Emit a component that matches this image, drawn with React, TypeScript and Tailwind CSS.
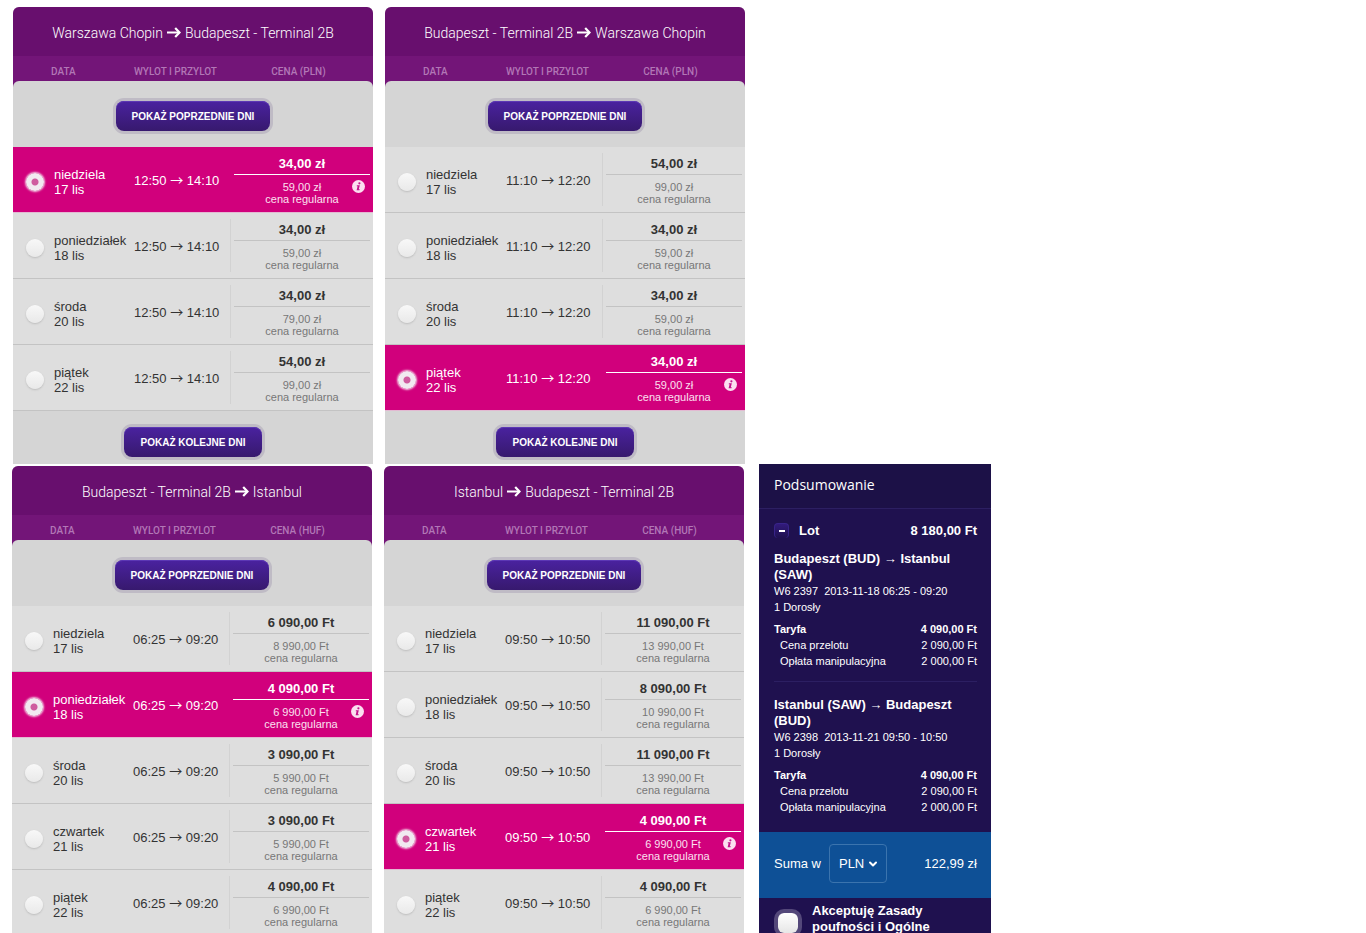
import { useState } from "react";
import { ChevronDown } from "lucide-react";

type Flight = {
  day: string;
  date: string;
  price: string;
  regular: string;
};

type Panel = {
  id: string;
  from: string;
  to: string;
  currency: string;
  depart: string;
  arrive: string;
  selected: number;
  flights: Flight[];
};

const topPanels: Panel[] = [
  {
    id: "waw-bud",
    from: "Warszawa Chopin",
    to: "Budapeszt - Terminal 2B",
    currency: "PLN",
    depart: "12:50",
    arrive: "14:10",
    selected: 0,
    flights: [
      { day: "niedziela", date: "17 lis", price: "34,00 zł", regular: "59,00 zł" },
      { day: "poniedziałek", date: "18 lis", price: "34,00 zł", regular: "59,00 zł" },
      { day: "środa", date: "20 lis", price: "34,00 zł", regular: "79,00 zł" },
      { day: "piątek", date: "22 lis", price: "54,00 zł", regular: "99,00 zł" },
    ],
  },
  {
    id: "bud-waw",
    from: "Budapeszt - Terminal 2B",
    to: "Warszawa Chopin",
    currency: "PLN",
    depart: "11:10",
    arrive: "12:20",
    selected: 3,
    flights: [
      { day: "niedziela", date: "17 lis", price: "54,00 zł", regular: "99,00 zł" },
      { day: "poniedziałek", date: "18 lis", price: "34,00 zł", regular: "59,00 zł" },
      { day: "środa", date: "20 lis", price: "34,00 zł", regular: "59,00 zł" },
      { day: "piątek", date: "22 lis", price: "34,00 zł", regular: "59,00 zł" },
    ],
  },
];

const bottomPanels: Panel[] = [
  {
    id: "bud-saw",
    from: "Budapeszt - Terminal 2B",
    to: "Istanbul",
    currency: "HUF",
    depart: "06:25",
    arrive: "09:20",
    selected: 1,
    flights: [
      { day: "niedziela", date: "17 lis", price: "6 090,00 Ft", regular: "8 990,00 Ft" },
      { day: "poniedziałek", date: "18 lis", price: "4 090,00 Ft", regular: "6 990,00 Ft" },
      { day: "środa", date: "20 lis", price: "3 090,00 Ft", regular: "5 990,00 Ft" },
      { day: "czwartek", date: "21 lis", price: "3 090,00 Ft", regular: "5 990,00 Ft" },
      { day: "piątek", date: "22 lis", price: "4 090,00 Ft", regular: "6 990,00 Ft" },
    ],
  },
  {
    id: "saw-bud",
    from: "Istanbul",
    to: "Budapeszt - Terminal 2B",
    currency: "HUF",
    depart: "09:50",
    arrive: "10:50",
    selected: 3,
    flights: [
      { day: "niedziela", date: "17 lis", price: "11 090,00 Ft", regular: "13 990,00 Ft" },
      { day: "poniedziałek", date: "18 lis", price: "8 090,00 Ft", regular: "10 990,00 Ft" },
      { day: "środa", date: "20 lis", price: "11 090,00 Ft", regular: "13 990,00 Ft" },
      { day: "czwartek", date: "21 lis", price: "4 090,00 Ft", regular: "6 990,00 Ft" },
      { day: "piątek", date: "22 lis", price: "4 090,00 Ft", regular: "6 990,00 Ft" },
    ],
  },
];

const legs = [
  { route: "Budapeszt (BUD) → Istanbul (SAW)", number: "W6 2397", time: "2013-11-18 06:25 - 09:20" },
  { route: "Istanbul (SAW) → Budapeszt (BUD)", number: "W6 2398", time: "2013-11-21 09:50 - 10:50" },
];

function DaysButton({ children }: { children: string }) {
  return (
    <button
      type="button"
      className="h-[30px] rounded-lg bg-linear-to-b from-[#4a22a0] to-[#37196e] px-4 text-[10px] font-bold text-white shadow-[0_0_0_3px_#bfbbc5,inset_0_1px_0_#5c38b4]"
    >
      {children}
    </button>
  );
}

function InfoIcon() {
  return (
    <svg viewBox="0 0 13 13" className="absolute right-2 top-[27px] size-[13px]" aria-hidden="true">
      <circle cx="6.5" cy="6.5" r="6.5" fill="#fbe0f0" />
      <circle cx="7.4" cy="3.3" r="1.1" fill="#c4128a" />
      <path d="M4.9 5.2h2.9L6.8 9.3h1l-.3 1H4.6l1-4.1h-.9z" fill="#c4128a" />
    </svg>
  );
}

function FlightPanel({ panel, more = false }: { panel: Panel; more?: boolean }) {
  const [selected, setSelected] = useState(panel.selected);

  return (
    <section className="w-full max-w-[360px] overflow-hidden rounded-t-md bg-[#d5d5d5]">
      <h2 className="flex h-[49px] items-center justify-center gap-1 bg-[#680f6e] pt-0.5 font-[Roboto,sans-serif] text-sm font-light text-white">
        {panel.from}
        <svg viewBox="0 0 14 11" className="h-[11px] w-3.5" fill="none" stroke="currentColor" aria-hidden="true">
          <path d="M0 5.5h12" strokeWidth="2.2" />
          <path d="M8.2 1l4.3 4.5L8.2 10" strokeWidth="2.2" />
        </svg>
        {panel.to}
      </h2>
      <table className="w-full table-fixed border-separate border-spacing-0">
        <thead className="bg-[#731578] font-[Roboto,sans-serif] text-[10px] text-[#b277b6]">
          <tr className="h-[25px]">
            <th className="w-[121px] pl-[38px] pt-1.5 text-left font-medium">DATA</th>
            <th className="w-24 pt-1.5 text-left font-medium">WYLOT I PRZYLOT</th>
            <th className="pr-1.5 pt-1.5 text-center font-medium">CENA ({panel.currency})</th>
          </tr>
        </thead>
        <tbody>
          <tr>
            <td colSpan={3} className="bg-[#731578] p-0">
              <div className="flex h-[66px] items-center justify-center rounded-t-md bg-[#d5d5d5] pt-1">
                <DaysButton>POKAŻ POPRZEDNIE DNI</DaysButton>
              </div>
            </td>
          </tr>
          {panel.flights.map((flight, i) => {
            const active = i === selected;
            return (
              <tr key={flight.day} className={active ? "bg-[#d1007c] text-white" : "bg-[#dedede] text-[#333]"}>
                <td className={`border-b p-0 ${active ? "border-[#e3b9d2]" : "border-[#c3c3c3]"}`}>
                  <label className="flex items-center gap-2.5 pl-[13px] pt-1 leading-[15px]">
                    <input
                      type="radio"
                      name={panel.id}
                      checked={active}
                      onChange={() => setSelected(i)}
                      className="size-[18px] shrink-0 appearance-none rounded-full bg-linear-to-b from-[#f8f8f8] to-[#e9e9e9] shadow-[0_1px_2px_#bbb] checked:bg-[radial-gradient(circle,#cf5c9f_0_3px,#f1eaf0_4px)] checked:shadow-[0_0_2px_1px_#f3d3e6]"
                    />
                    <span className="whitespace-nowrap">
                      {flight.day}
                      <br />
                      {flight.date}
                    </span>
                  </label>
                </td>
                <td className={`whitespace-nowrap border-b p-0 pt-0.5 ${active ? "border-[#e3b9d2]" : "border-[#c3c3c3]"}`}>
                  {panel.depart} <span className="font-['Noto_Sans_CJK_JP',sans-serif] leading-none">→</span> {panel.arrive}
                </td>
                <td className={`border-b p-0 ${active ? "border-[#e3b9d2]" : "border-[#c3c3c3]"}`}>
                  <div
                    className={`relative my-1.5 h-[53px] border-l px-[3px] pt-[3px] text-center ${
                      active ? "border-transparent" : "border-[#d2d2d2]"
                    }`}
                  >
                    <div className={`border-b pb-0.5 font-bold leading-4 ${active ? "border-white" : "border-[#c3c3c3]"}`}>
                      {flight.price}
                    </div>
                    <div className={`mt-1.5 text-[11px] leading-3 ${active ? "text-[#fbe0f0]" : "text-[#777]"}`}>
                      {flight.regular}
                      <br />
                      cena regularna
                    </div>
                    {active && <InfoIcon />}
                  </div>
                </td>
              </tr>
            );
          })}
        </tbody>
      </table>
      {more && (
        <div className="flex justify-center pb-[7px] pt-4">
          <DaysButton>POKAŻ KOLEJNE DNI</DaysButton>
        </div>
      )}
    </section>
  );
}

function Summary() {
  const [open, setOpen] = useState(true);

  return (
    <aside className="ml-[3px] w-full max-w-[232px] bg-[#1f114f] text-white">
      <h2 className="h-[45px] border-b border-[#2c1f62] bg-[#1c1147] pl-[15px] font-['Open_Sans','Noto_Sans',sans-serif] text-sm leading-[42px]">
        Podsumowanie
      </h2>
      <div className="pb-[17px] pl-[15px] pr-3.5 pt-3.5">
        <div className="flex h-4 items-center font-bold">
          <button
            type="button"
            aria-label="Lot"
            aria-expanded={open}
            onClick={() => setOpen(!open)}
            className="mb-0.5 flex size-[15px] items-center justify-center rounded-sm border border-b-0 border-[#38248a] bg-linear-to-b from-[#321a7c] to-[#1f114f]"
          >
            <span className="h-0.5 w-1.5 bg-white" />
          </button>
          <span className="ml-2.5 grow">Lot</span>
          <span>8 180,00 Ft</span>
        </div>
        {open &&
          legs.map((leg, i) => (
            <div
              key={leg.number}
              className={`text-[11px] leading-4 ${i === 0 ? "mt-3 border-b border-[#2c1f62] pb-3" : "pt-[15px]"}`}
            >
              <h3 className="text-[13px] font-bold leading-4">{leg.route}</h3>
              <p className="whitespace-pre">{`${leg.number}  ${leg.time}`}</p>
              <p>1 Dorosły</p>
              <dl className="mt-1.5">
                <div className="flex justify-between font-bold">
                  <dt>Taryfa</dt>
                  <dd>4 090,00 Ft</dd>
                </div>
                <div className="flex justify-between pl-1.5">
                  <dt>Cena przelotu</dt>
                  <dd>2 090,00 Ft</dd>
                </div>
                <div className="flex justify-between pl-1.5">
                  <dt>Opłata manipulacyjna</dt>
                  <dd>2 000,00 Ft</dd>
                </div>
              </dl>
            </div>
          ))}
      </div>
      <div className="flex h-[66px] items-center bg-[#0e5096] pb-[3px] pl-[15px] pr-3.5">
        <label htmlFor="currency">Suma w</label>
        <div className="relative ml-2">
          <select
            id="currency"
            className="block h-[39px] w-[58px] appearance-none rounded border border-[#3b74ae] bg-transparent pl-[9px] text-white"
          >
            <option>PLN</option>
          </select>
          <ChevronDown
            className="pointer-events-none absolute right-2 top-3.5 size-3"
            strokeWidth={4}
            aria-hidden="true"
          />
        </div>
        <span className="ml-auto">122,99 zł</span>
      </div>
      <label className="flex items-start gap-3.5 pb-3 pl-[19px] pr-8 pt-[5px] font-bold leading-4">
        <input
          type="checkbox"
          className="mt-2.5 size-5 shrink-0 appearance-none rounded-md bg-linear-to-b from-white to-[#e6e6e6] shadow-[0_0_0_4px_#54487a] checked:bg-[#d1007c]"
        />
        Akceptuję Zasady poufności i Ogólne
      </label>
    </aside>
  );
}

export default function App() {
  return (
    <main className="h-screen overflow-hidden bg-white font-['Liberation_Sans',Arial,sans-serif] text-[13px]">
      <div className="flex gap-3 pl-[13px] pt-[7px]">
        {topPanels.map((panel) => (
          <FlightPanel key={panel.id} panel={panel} more />
        ))}
      </div>
      <div className="flex items-start gap-3 pl-3">
        <div className="flex w-full max-w-[732px] gap-3 pt-0.5">
          {bottomPanels.map((panel) => (
            <FlightPanel key={panel.id} panel={panel} />
          ))}
        </div>
        <Summary />
      </div>
    </main>
  );
}
